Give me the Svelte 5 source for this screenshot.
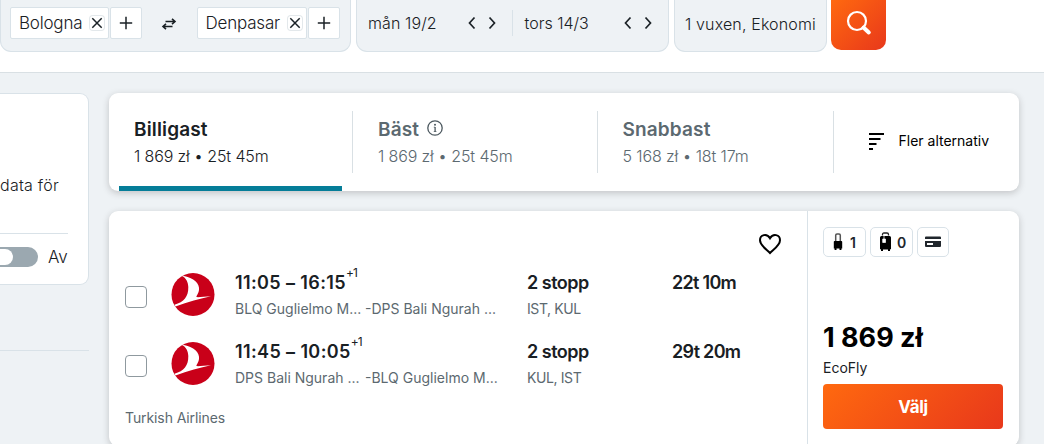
<script>
  const tabs = [
    { title: 'Billigast', detail: '1 869 zł • 25t 45m', active: true },
    { title: 'Bäst', detail: '1 869 zł • 25t 45m', info: true },
    { title: 'Snabbast', detail: '5 168 zł • 18t 17m' }
  ];
  const legs = [
    { time: '11:05 – 16:15', from: 'BLQ Guglielmo M...', to: '-DPS Bali Ngurah ...', codes: 'IST, KUL', duration: '22t 10m' },
    { time: '11:45 – 10:05', from: 'DPS Bali Ngurah ...', to: '-BLQ Guglielmo M...', codes: 'KUL, IST', duration: '29t 20m' }
  ];
</script>

{#snippet place(name)}
  <div class="place">
    <div class="chip"><span class="name">{name}</span>
      <button class="remove" aria-label="×"><svg width="14" height="14" viewBox="0 0 14 14"><path d="M2.3 2.3l9.4 9.4M11.7 2.3l-9.4 9.4" /></svg></button>
    </div>
    <button class="add" aria-label="+"><svg width="14" height="14" viewBox="0 0 14 14"><path d="M7 .8v12.4M.8 7h12.4" /></svg></button>
  </div>
{/snippet}

{#snippet arrows()}
  <div class="arrows">
    <svg width="8" height="14" viewBox="0 0 8 14"><path d="M6.5 1.5L1.5 7l5 5.5" /></svg>
    <svg width="8" height="14" viewBox="0 0 8 14"><path d="M1.5 1.5l5 5.5-5 5.5" /></svg>
  </div>
{/snippet}

<div class="page">
  <header>
    <div class="field route">
      {@render place('Bologna')}
      <svg class="swap" width="16" height="12" viewBox="0 0 16 12"><path d="M4.500 3.500H14M11 .8l3 2.700-3 2.700M11.500 8.500H2M5 5.800L2 8.500l3 2.700" /></svg>
      {@render place('Denpasar')}
    </div>
    <div class="field dates">
      <div class="date"><span class="d1">mån 19/2</span>{@render arrows()}</div>
      <div class="date second"><span class="d2">tors 14/3</span>{@render arrows()}</div>
    </div>
    <div class="field travelers"><span>1 vuxen, Ekonomi</span></div>
    <button class="search" aria-label="Sök">
      <svg width="26" height="26" viewBox="0 0 26 26"><circle cx="11" cy="11" r="9" /><path d="M17.5 17.5l5.3 5" class="handle" /></svg>
    </button>
  </header>

  <main>
    <aside>
      <section class="alert">
        <p>data för</p>
        <div class="switch-row"><span class="switch"><i></i></span><span>Av</span></div>
      </section>
      <hr />
    </aside>

    <div class="results">
      <nav class="card">
        {#each tabs as tab}
          <div class="tab" class:active={tab.active}>
            <div class="title"><span>{tab.title}</span>
              {#if tab.info}
                <svg width="16" height="16" viewBox="0 0 16 16"><circle cx="8" cy="8" r="7.2" /><path d="M8.100 7v4.700" /><path d="M6.800 7.200h1.300M6.800 11.500h2.600" stroke-width=".8" /><circle class="dot" cx="8" cy="4.800" r="1" /></svg>
              {/if}
            </div>
            <div class="detail">{tab.detail}</div>
          </div>
        {/each}
        <div class="more">
          <svg width="16" height="18" viewBox="0 0 16 18"><path d="M0 2h15M0 7h11.5M0 12h7.5M0 17h4" /></svg>
          <span>Fler alternativ</span>
        </div>
      </nav>

      <article class="card">
        <div class="flight">
          <div class="save"><svg width="24" height="22" viewBox="0 0 24 22"><path d="M12 20C9.500 17.200 2 12.600 2 7.200 2 1.400 9 .1 12 5.200 15 .1 22 1.400 22 7.200 22 12.600 14.500 17.200 12 20Z" /></svg></div>
          {#each legs as leg}
            <div class="leg">
              <span class="check"></span>
              <svg class="logo" width="44" height="44" viewBox="0 0 44 44">
                <circle cx="22" cy="21.500" r="21.500" fill="#c90019" />
                <path d="M12 2.700C23 5 29 10.500 28 17 27.400 21 25 23.500 25.500 24 27 24.500 34 23.500 40 23.200 29 25.500 17 29 4.500 33.500L3.500 31.800C13 29 17.500 23.500 17.300 14 17 8.500 15 5 11 3Z" fill="#fff" />
              </svg>
              <div class="times">
                <div class="strong hours">{leg.time}<sup>+1</sup></div>
                <div class="airports"><span>{leg.from}</span><span>{leg.to}</span></div>
              </div>
              <div class="stops"><div class="strong">2 stopp</div><div class="codes">{leg.codes}</div></div>
              <div class="strong duration">{leg.duration}</div>
            </div>
          {/each}
          <div class="airline">Turkish Airlines</div>
        </div>
        <div class="offer">
          <div class="badges">
            <span class="badge"><svg width="10" height="18" viewBox="0 0 10 18"><path d="M2.700 8V2.200Q2.700 1 4 1h2q1.300 0 1.300 1.200V8" fill="none" stroke="#555" stroke-width="1.500" /><path d="M1.600 8h6.800q.8 0 .8.800v6.700H8.400V17H6.500v-1.500h-3V17H1.600v-1.500H.8V8.800q0-.8.800-.8Z" /></svg>1</span>
            <span class="badge big"><svg width="13" height="20" viewBox="0 0 13 20"><path d="M3.500 3.500V2.500Q3.500 1 5 1h3q1.500 0 1.500 1.500v1" fill="none" stroke="#222" stroke-width="1.300" /><path d="M2.500 4h8Q12 4 12 5.500v11.700H11V19H9v-1.500H4V19H2v-1.800H1V5.500Q1 4 2.500 4Z" /><path d="M5 3.500v3.500M3.700 7h2.800v3.500H3.700z" fill="#fff" stroke="#fff" stroke-width=".7" /></svg>0</span>
            <span class="badge pay"><svg width="16" height="12" viewBox="0 0 16 12"><path d="M1 .5h14q1 0 1 1V3H0V1.500q0-1 1-1ZM0 5h16v5q0 1-1 1H1q-1 0-1-1V5Zm2 2v2h6V7H2Z" fill="#20262c" fill-rule="evenodd" /></svg></span>
          </div>
          <div class="price">1 869 zł</div>
          <div class="fare">EcoFly</div>
          <button class="select">Välj</button>
        </div>
      </article>
    </div>
  </main>
</div>

<style>
  :global(body) { margin: 0; overflow: hidden; }
  * { box-sizing: border-box; }
  .page { width: 1044px; height: 444px; overflow: hidden; background: #eef2f5; color: #192024; font-family: Inter, "Liberation Sans", sans-serif; font-size: 16px; }
  button { font: inherit; border: 0; padding: 0; }
  svg { display: block; flex: none; }
  header { height: 73px; background: #fff; border-bottom: 1px solid #d9e0e4; display: flex; align-items: flex-start; }
  .field { height: 52px; background: #eef2f5; border: 1px solid #d9e2e8; border-top: 0; border-radius: 0 0 11px 11px; display: flex; font-weight: 300; white-space: nowrap; }
  .route { width: 351px; padding: 7px 10px 0 9px; margin-right: 5px; justify-content: space-between; }
  .place { display: flex; gap: 1px; height: 32px; }
  .chip, .add { background: #fff; border: 1px solid #d9e2e8; border-radius: 2px; display: flex; align-items: center; }
  .chip { padding: 0 4px 0 8px; gap: 8px; }
  .add { width: 32px; justify-content: center; }
  .name { font-size: 17px; letter-spacing: -.2px; }
  .remove { width: 14px; height: 14px; background: #fff; border-radius: 3px; box-shadow: 0 0 0 1px #e3e8eb; }
  .remove svg, .add svg { fill: none; stroke: #1b2227; stroke-width: 1.5; }
  .swap { margin-top: 11px; fill: none; stroke: #192024; stroke-width: 1.6; }
  .dates { width: 313px; padding: 10px 0 0; margin-right: 5px; }
  .date { height: 26px; width: 156px; padding: 0 17px 0 11px; display: flex; justify-content: space-between; align-items: center; }
  .d1 { letter-spacing: .1px; }
  .date.second { border-left: 1px solid #d9e2e8; padding: 0 16px 0 12px; margin-left: -1px; width: 157px; }
  .arrows { display: flex; gap: 12px; }
  .arrows svg { fill: none; stroke: #1b2227; stroke-width: 1.7; }
  .travelers { width: 153px; padding: 14px 0 0 10px; margin-right: 4px; }
  .travelers span { letter-spacing: .14px; }
  .search { width: 55px; height: 50px; border-radius: 0 0 10px 10px; background: linear-gradient(135deg, #ff690f, #e8381b); display: grid; place-items: center; padding: 0 0 4px; }
  .search svg { fill: none; stroke: #fff; stroke-width: 2.2; }
  .search .handle { stroke-width: 4; stroke-linecap: round; }
  main { display: flex; padding-top: 20px; gap: 20px; }
  aside { width: 89px; }
  .alert { height: 192px; background: #fff; border: 1px solid #d9e2e8; border-left: 0; border-radius: 0 9px 9px 0; padding: 79px 20px 0 0; font-weight: 300; }
  p { margin: 0; height: 60px; line-height: 24px; white-space: nowrap; letter-spacing: .25px; }
  .switch-row { border-top: 1px solid #d9e2e8; padding-top: 12px; display: flex; align-items: center; gap: 10px; line-height: 22px; font-size: 17px; }
  .switch { width: 38px; height: 20px; background: #9ba8b0; border-radius: 0 10px 10px 0; display: flex; align-items: center; }
  .switch i { width: 13px; height: 16px; background: #fff; border-radius: 0 8px 8px 0; }
  hr { border: 0; border-top: 1px solid #d9e2e8; margin: 65px 0 0; }
  .results { width: 910px; }
  .card { background: #fff; border-radius: 9px; box-shadow: 0 2px 7px rgba(37, 32, 31, .22); display: flex; }
  nav { height: 98px; padding-left: 10px; margin-bottom: 20px; }
  .tab { width: 244.500px; padding: 23px 0 0 25px; color: #5c6970; background: linear-gradient(#d9e0e4, #d9e0e4) 100% 18px / 1px 62px no-repeat; white-space: nowrap; }
  .tab:first-child { width: 234px; padding-left: 15px; position: relative; }
  .tab:nth-child(3) { width: 236px; }
  .tab.active { color: #192024; }
  .active::after { content: ""; position: absolute; left: 0; bottom: 0; width: 223px; height: 5px; background: #057d98; }
  .title { height: 27px; display: flex; align-items: center; gap: 8px; font-size: 19px; font-weight: 600; letter-spacing: .15px; }
  .title svg { fill: none; stroke: #4d5960; stroke-width: 1.3; margin-bottom: 3px; }
  .title .dot { fill: #4d5960; stroke: none; }
  .detail { font-weight: 300; line-height: 26px; letter-spacing: -.13px; }
  .more { display: flex; align-items: center; gap: 14px; padding: 0 0 2px 35px; color: #000; font-size: 14px; white-space: nowrap; }
  .more span { margin-top: -2px; }
  .more svg { fill: none; stroke: #000; stroke-width: 2; }
  article { height: 235px; }
  .flight { width: 699px; border-right: 1px solid #d9e2e8; padding: 22px 16px 0; flex: none; }
  .save { height: 33px; display: flex; justify-content: flex-end; padding-right: 9px; }
  .save svg { fill: none; stroke: #000; stroke-width: 2; }
  .leg { height: 69px; display: flex; white-space: nowrap; }
  .check { width: 22px; height: 22px; margin: 20px 24px 0 0; border: 1px solid #8f999f; border-radius: 4px; flex: none; }
  .logo { margin-top: 7px; }
  .times { width: 312px; padding-left: 20px; }
  .strong { height: 34px; line-height: 33px; font-size: 18px; font-weight: 600; letter-spacing: -.5px; }
  .hours { letter-spacing: .38px; }
  .duration { letter-spacing: -.7px; }
  sup { font-size: 12px; font-weight: 400; line-height: 0; position: relative; top: -5px; letter-spacing: -1px; }
  .airports, .codes { display: flex; color: #5c6970; font-size: 14px; line-height: 17px; font-weight: 400; }
  .airports span:first-child { width: 130px; }
  .codes { letter-spacing: -.4px; }
  .stops { width: 145px; }
  .airline { padding-top: 4px; font-size: 14px; line-height: 20px; color: #5c6970; letter-spacing: -.1px; }
  .offer { width: 211px; padding: 16px 16px 0 15px; color: #000; }
  .badges { display: flex; gap: 4px; }
  .badge { width: 43px; height: 30px; border: 1px solid #d9e2e8; border-radius: 5px; display: flex; align-items: center; justify-content: center; gap: 7px; font-size: 14px; font-weight: 600; color: #20262c; }
  .big { gap: 5px; padding-left: 2px; }
  .pay { width: 32px; }
  .badge svg { fill: #000; }
  .price { margin-top: 63px; font-size: 27px; line-height: 36px; font-weight: 700; white-space: nowrap; }
  .fare { font-size: 14px; line-height: 24px; color: #192024; font-weight: 400; }
  .select { margin-top: 4px; width: 180px; height: 45px; border-radius: 4px; color: #fff; background: linear-gradient(135deg, #ff690f, #e8381b); font-size: 17px; font-weight: 700; letter-spacing: -.4px; display: block; }
</style>
